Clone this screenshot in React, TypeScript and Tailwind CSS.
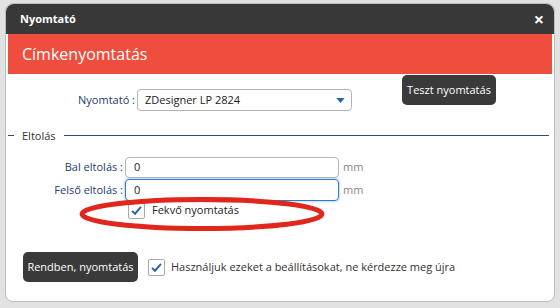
import React from "react";

const font = { fontFamily: '"Open Sans", "DejaVu Sans", sans-serif' };

const Check = () => (
  <span className="flex h-[17px] w-[17px] items-center justify-center rounded-[2px] border border-[#a9a9a9] bg-white">
    <svg viewBox="0 0 16 16" className="h-[13px] w-[13px]">
      <path d="M2.5 8.5 L6.2 12 L13.5 3.5" fill="none" stroke="#2566b0" strokeWidth="2.4" />
    </svg>
  </span>
);

const DarkButton = ({ children, className }: { children: React.ReactNode; className: string }) => (
  <button className={`flex items-center justify-center whitespace-nowrap rounded-[5px] bg-[#3a3a3a] text-[11px] text-white ${className}`}>
    {children}
  </button>
);

export default function App() {
  return (
    <div className="h-[308px] w-[560px] overflow-hidden bg-[#e2e2e2] pl-[5px] pt-[3px]" style={font}>
      <div className="relative flex h-[299px] w-[550px] flex-col rounded-[8px] border border-[#bdbdbd] bg-white">
        <div className="flex h-[30px] items-center justify-between rounded-t-[8px] bg-[#383838] pl-[14px] pr-[10px]">
          <span className="text-[11px] font-bold text-white">Nyomtató</span>
          <span className="text-[18px] font-bold leading-none text-white">×</span>
        </div>
        <div className="flex flex-1 flex-col px-[2px]">
          <div className="flex h-[40px] items-center bg-[#ef4d3e] pl-[14px] text-[16px] text-white">
            Címkenyomtatás
          </div>

          <div className="flex h-[37px] items-start">
            <span className="mt-[18px] w-[127px] text-right text-[11px] text-[#1d3d6e]">Nyomtató :</span>
            <div className="ml-[2px] mt-[15px] flex h-[22px] w-[215px] items-center justify-between rounded-[4px] border border-[#b5b5b5] pl-[7px] pr-[6px] text-[11px] text-[#222]">
              <span>ZDesigner LP 2824</span>
              <svg viewBox="0 0 10 6" className="h-[5px] w-[9px]">
                <path d="M0 0 L10 0 L5 6 Z" fill="#2566b0" />
              </svg>
            </div>
            <DarkButton className="ml-[50px] mt-[1px] h-[30px] w-[94px]">Teszt nyomtatás</DarkButton>
          </div>

          <div className="mt-[16px] flex h-[16px] items-center pr-[3px]">
            <span className="h-px w-[6px] bg-[#2e4c77]" />
            <span className="px-[8px] text-[11px] leading-none text-[#333]">Eltolás</span>
            <span className="h-px flex-1 bg-[#2e4c77]" />
          </div>

          <div className="mt-[14px] flex items-center">
            <span className="w-[115px] text-right text-[11px] text-[#1d3d6e]">Bal eltolás :</span>
            <div className="ml-[2px] flex h-[21px] w-[214px] items-center rounded-[4px] border border-[#b5b5b5] pl-[8px] text-[11px] text-[#222]">0</div>
            <span className="ml-[4px] text-[11px] text-[#888]">mm</span>
          </div>
          <div className="mt-[1px] flex items-center">
            <span className="w-[115px] text-right text-[11px] text-[#1d3d6e]">Felső eltolás :</span>
            <div className="ml-[2px] flex h-[22px] w-[214px] items-center rounded-[4px] border border-[#2a7ccc] pl-[8px] text-[11px] text-[#222] shadow-[0_0_3px_rgba(42,124,204,0.6)]">0</div>
            <span className="ml-[4px] text-[11px] text-[#888]">mm</span>
          </div>
          <div className="mt-[1px] flex items-center pl-[120px]">
            <Check />
            <span className="ml-[7px] text-[11px] text-[#222]">Fekvő nyomtatás</span>
          </div>

          <div className="mt-[33px] flex items-center pl-[15px]">
            <DarkButton className="h-[30px] w-[115px]">Rendben, nyomtatás</DarkButton>
            <span className="ml-[10px] flex items-center">
              <Check />
            </span>
            <span className="ml-[6px] text-[11px] text-[#333]">
              Használjuk ezeket a beállításokat, ne kérdezze meg újra
            </span>
          </div>
        </div>

        <svg className="pointer-events-none absolute left-[70px] top-[190px]" width="260" height="40" viewBox="0 0 260 40">
          <ellipse cx="126" cy="20" rx="120" ry="14.5" fill="none" stroke="#e1261c" strokeWidth="5" />
        </svg>
      </div>
    </div>
  );
}
